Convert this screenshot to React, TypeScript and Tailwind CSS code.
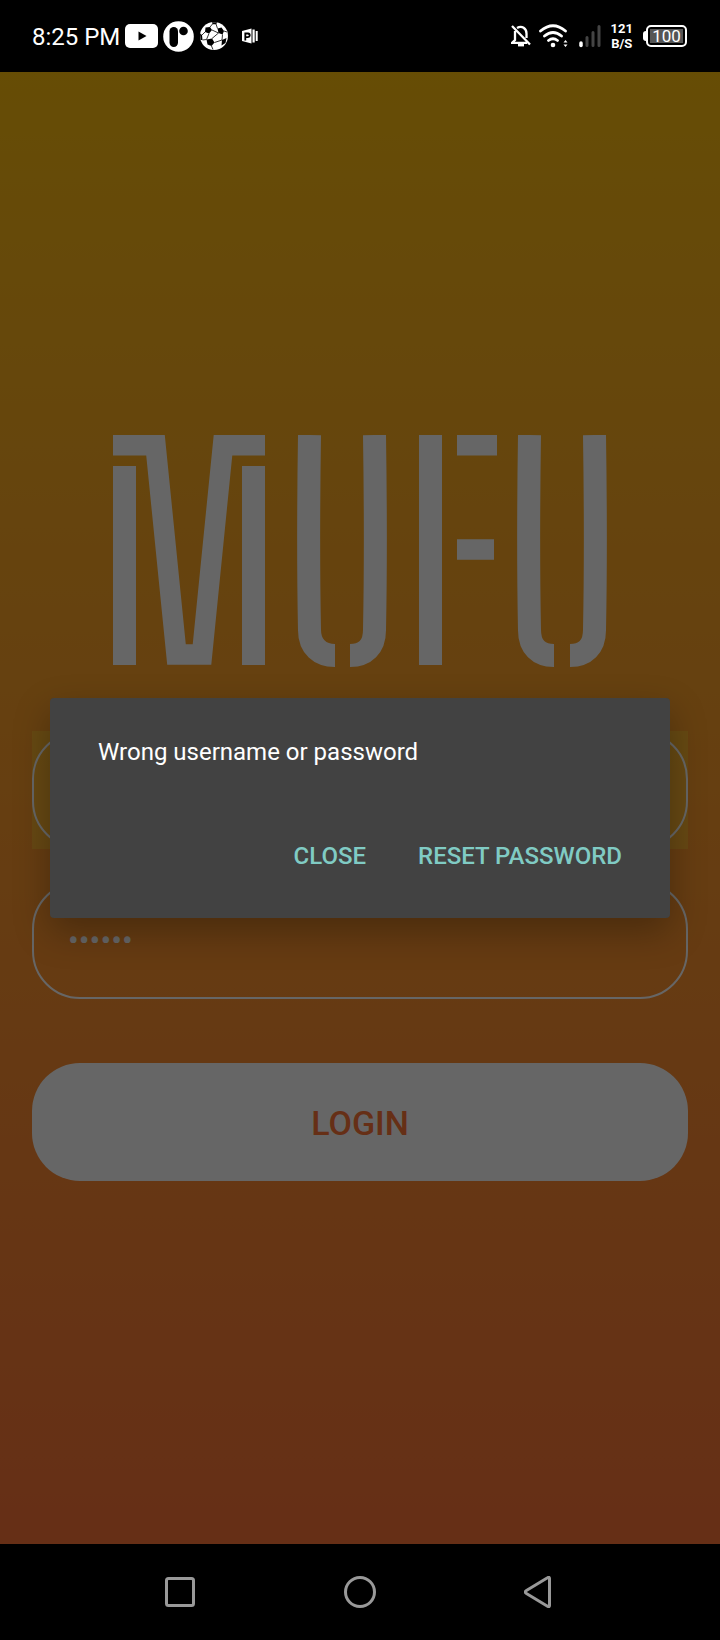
import React from "react";

function MufuLogo() {
  return (
    <svg role="img" aria-label="MUFU" viewBox="113 435 494 233" className="w-[494px] max-w-full" fill="none" stroke="#fff">
      <path strokeWidth="23" d="M124.500 466V665M253.500 466V665" />
      <path strokeWidth="20.500" strokeMiterlimit="10" d="M113 445.200H155.500L176.500 654.500H202L223 445.200H265" />
      <path strokeWidth="23" d="M309.500 435C308.500 500 308.500 580 309.500 630C309.500 647 320 655.500 335 655.500M374.500 435C375.500 500 375.500 580 374.500 630C374.500 647 365 655.500 350 655.500" />
      <path strokeWidth="23" d="M430.500 435V665" />
      <path strokeWidth="20.500" d="M457 445.200H497M457 549.500H494" />
      <path strokeWidth="23" d="M529.500 435C528.500 500 528.500 580 529.500 630C529.500 647 539 655.500 554 655.500M594.500 435C595.500 500 595.500 580 594.500 630C594.500 647 585 655.500 570 655.500" />
    </svg>
  );
}

function NotificationIcons() {
  return (
    <div className="flex items-center">
      <svg className="ml-[5px] h-6 w-[33px]" viewBox="0 0 33 24">
        <rect width="33" height="24" rx="5" fill="#fff" />
        <path d="M13.500 7.500V16.500L21.500 12Z" fill="#000" />
      </svg>
      <svg className="ml-[5px] size-[31px]" viewBox="0 0 31 31">
        <circle cx="15.500" cy="15.500" r="15.300" fill="#fff" />
        <rect x="6.500" y="6" width="8.500" height="20" rx="4.200" fill="#000" />
        <circle cx="20.500" cy="10" r="4.300" fill="#000" />
      </svg>
      <svg className="ml-1.5 size-7" viewBox="0 0 28 28">
        <circle cx="14" cy="14" r="14" fill="#fff" />
        <path fill="#000" d="M5.500 5.500L10 5L12 8L9 11.500L5 10ZM17.500 6.500L21.500 5.500L24 9L22.500 12.500L18.500 11ZM6.500 17.500L12 16.500L14.500 20.500L11.500 24L7.500 22.500ZM22 18L26.500 16L25.500 21L21.500 23.500ZM0 11.500L2 13L2.500 18L.500 18ZM12 .200H17.500L16 2.200H12.500Z" />
        <path stroke="#000" strokeWidth=".800" fill="none" d="M10 5L12.500 2M16 2L17.500 6.500M12 8L18.500 11M9 11.500L6.500 17.500M5 10L2 13M2.500 18L6.500 17.500M18.500 11L12 16.500M22.500 12.500L22 18M14.500 20.500L22 18M11.500 24L13 27.500M24 9L27 10" />
      </svg>
      <svg className="ml-3.5 size-4" viewBox="0 0 16 16">
        <path d="M0 3L9.500 .500V15.500L0 13Z" fill="#fff" />
        <path d="M10.500 1.500H12.700V14.500H10.500ZM13.700 3H15.700V13H13.700Z" fill="#fff" />
        <path d="M3.300 12.500V5.500H6Q8 5.800 7.700 7.800Q7.400 9.300 5.500 9.200H3.500" stroke="#000" strokeWidth="1.800" fill="none" />
      </svg>
    </div>
  );
}

function SystemIcons() {
  return (
    <div className="flex items-center">
      <svg className="h-6 w-5" viewBox="0 0 20 24" fill="none" stroke="#fff" strokeWidth="2.300">
        <path d="M1 2L19 20.500M6 4C11 1 15.500 4.500 15.500 9.500V14M4 7V16L1 18.800H16" />
        <path d="M7 21.200H13" strokeWidth="2.400" />
      </svg>
      <svg className="ml-2 h-6 w-[30px]" viewBox="0 0 30 24" fill="none" stroke="#fff" strokeWidth="2.800" strokeLinecap="round">
        <path d="M1.500 7Q14 -3.500 26.500 7M5.500 12Q14 5 22.500 12M9.500 16.500Q14 13 18.500 16.500" />
        <circle cx="14" cy="21" r="2.300" fill="#fff" stroke="none" />
        <path d="M24.500 18.500L26.500 16L28.500 18.500ZM24.500 20.500L26.500 23L28.500 20.500Z" fill="#fff" stroke="none" />
      </svg>
      <svg className="ml-2.5 h-6 w-[22px]" viewBox="0 0 22 24" strokeWidth="3" strokeLinecap="round">
        <path d="M2 19V21.500" stroke="#fff" strokeWidth="3.500" />
        <path d="M8 13.500V21.500M14 8.500V21.500M20 2.500V21.500" stroke="#444" />
      </svg>
      <div className="ml-2.5 text-center text-[13px] font-bold leading-[15px]">
        <div>121</div>
        <div>B/S</div>
      </div>
      <div className="ml-2.5 flex items-center">
        <div className="h-2.5 w-[3px] rounded-l bg-white" />
        <div className="flex h-[22px] w-[41px] items-center rounded-[5px] border-2 border-white p-0.5">
          <div className="flex h-full w-full items-center justify-center bg-[#555] text-[17px] leading-none">100</div>
        </div>
      </div>
    </div>
  );
}

export default function App() {
  return (
    <div className="flex min-h-screen flex-col bg-black font-[Roboto,sans-serif] text-white">
      <header className="flex h-[72px] items-center justify-between pr-[33px] pl-8">
        <div className="flex items-center">
          <span className="pt-0.5 text-2xl">8:25 PM</span>
          <NotificationIcons />
        </div>
        <SystemIcons />
      </header>

      <main className="relative flex flex-1 flex-col">
        <form className="flex flex-1 flex-col items-center justify-center bg-linear-to-b from-[#ffc00c] to-[#ff7538] px-8" onSubmit={(e) => e.preventDefault()}>
          <MufuLogo />
          <div className="mt-[63px] w-full bg-[#ffeb3b]/30">
            <input aria-label="Username" type="text" className="block h-[118px] w-full rounded-[48px] border-2 border-white px-9 text-[32px] outline-none" />
          </div>
          <input aria-label="Password" type="password" defaultValue="secret" className="mt-8 h-[118px] w-full rounded-[48px] border-2 border-white px-[34px] text-[32px] outline-none" />
          <button type="submit" className="mt-16 h-[118px] w-full rounded-[48px] bg-white pt-0.5 text-[34px] font-medium text-[#ff7538]">LOGIN</button>
        </form>

        <div className="absolute inset-0 flex items-center justify-center bg-black/60 px-[50px]">
          <div role="alertdialog" aria-labelledby="message" className="w-full rounded bg-[#424242] px-12 pt-9 pb-[26px] shadow-[0_14px_36px_rgba(0,0,0,0.28)]">
            <p id="message" className="text-2xl leading-9">Wrong username or password</p>
            <div className="mt-[50px] flex h-[72px] items-center justify-end gap-[52px] text-2xl font-medium text-[#80cbc4]">
              <button type="button">CLOSE</button>
              <button type="button">RESET PASSWORD</button>
            </div>
          </div>
        </div>
      </main>

      <nav className="flex h-24 items-center justify-center gap-[148px]">
        <button type="button" aria-label="Recent apps">
          <svg className="size-8" viewBox="0 0 32 32" fill="none" stroke="#999" strokeWidth="3"><rect x="2.500" y="2.500" width="27" height="27" rx="2" /></svg>
        </button>
        <button type="button" aria-label="Home">
          <svg className="size-8" viewBox="0 0 32 32" fill="none" stroke="#999" strokeWidth="3"><circle cx="16" cy="16" r="14.500" /></svg>
        </button>
        <button type="button" aria-label="Back">
          <svg className="size-8" viewBox="0 0 32 32" fill="none" stroke="#999" strokeWidth="3" strokeLinejoin="round"><path d="M25.500 2.500Q25.500 .500 23.500 1.800L2 14.800Q.500 16 2 17.200L23.500 30.200Q25.500 31.500 25.500 29.500Z" /></svg>
        </button>
      </nav>
    </div>
  );
}
